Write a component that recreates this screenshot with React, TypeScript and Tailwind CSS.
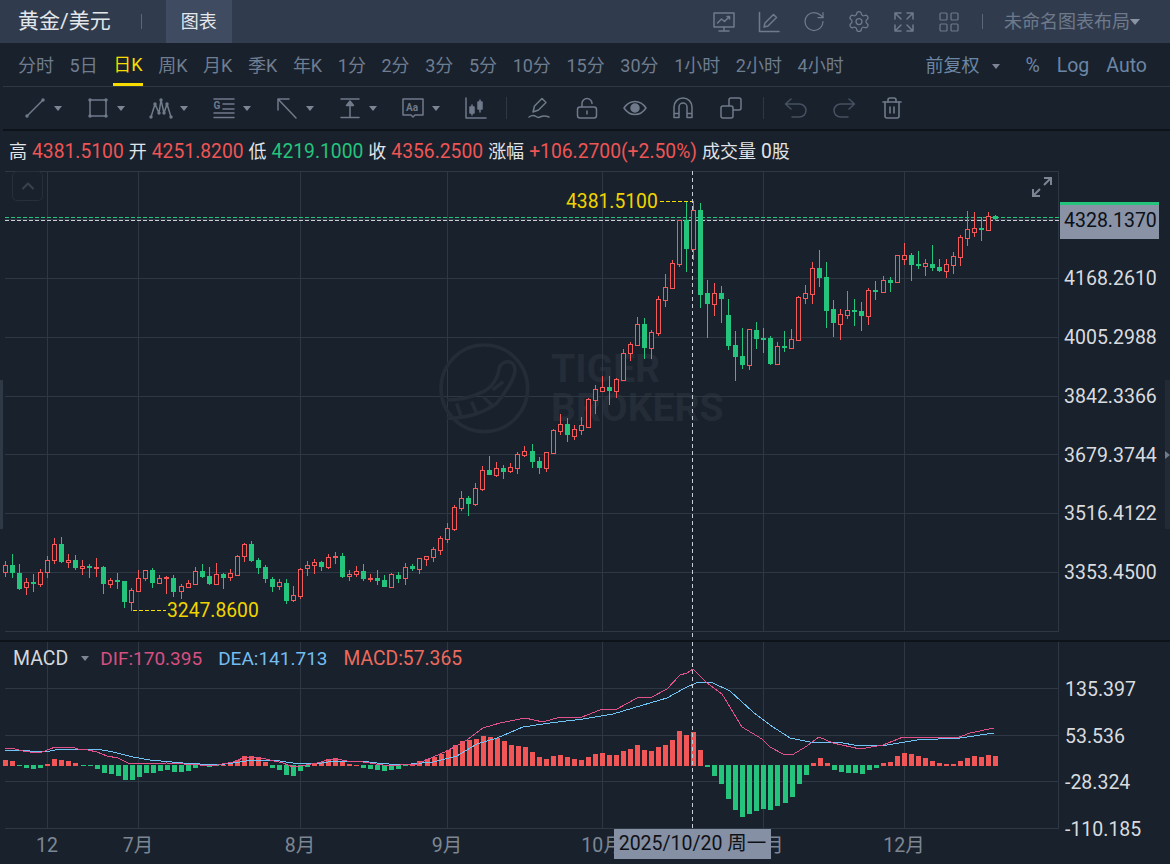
import { ChevronUp, LayoutGrid, RotateCw, Settings, Trash2 } from "lucide-react";
import { ReactNode } from "react";

const BG = "#19212c";
const UP = "#f55a5a";
const DOWN = "#25c47c";
const GRID = "#2e3844";

// x, body top, body bottom, high, low, green (page pixels)
const candles: number[][] = [
  [5, 565, 572, 561, 577, 0], [12, 565, 573, 554, 578, 1], [19, 573, 589, 564, 590, 1], [26, 582, 587, 578, 595, 0],
  [33, 582, 584, 574, 592, 1], [40, 572, 584, 569, 587, 0], [47, 560, 572, 556, 578, 0], [54, 544, 560, 538, 564, 0],
  [61, 544, 562, 537, 563, 1], [68, 560, 562, 554, 568, 0], [75, 560, 568, 555, 570, 1], [82, 566, 568, 560, 575, 0],
  [89, 566, 568, 564, 578, 1], [96, 567, 568, 558, 577, 0], [103, 567, 584, 566, 594, 1], [110, 580, 584, 578, 588, 0],
  [117, 580, 582, 573, 589, 1], [124, 581, 602, 581, 608, 1], [131, 590, 602, 588, 611, 0], [138, 578, 591, 570, 592, 0],
  [145, 570, 578, 570, 581, 0], [152, 570, 583, 568, 588, 1], [159, 578, 583, 575, 584, 0], [166, 577, 578, 576, 594, 0],
  [173, 578, 592, 575, 597, 1], [181, 586, 591, 584, 599, 0], [188, 583, 587, 580, 588, 0], [195, 571, 584, 567, 584, 0],
  [202, 571, 577, 564, 578, 1], [209, 576, 584, 567, 585, 1], [216, 574, 584, 563, 585, 0], [223, 574, 578, 573, 589, 1],
  [230, 573, 577, 569, 581, 0], [237, 556, 575, 555, 576, 0], [244, 544, 556, 543, 562, 0], [251, 544, 561, 541, 562, 1],
  [258, 560, 568, 558, 574, 1], [265, 567, 579, 565, 583, 1], [272, 579, 587, 577, 592, 1], [279, 582, 586, 579, 590, 0],
  [286, 583, 601, 579, 604, 1], [293, 595, 600, 586, 602, 0], [300, 569, 596, 568, 599, 0], [307, 565, 568, 561, 576, 0],
  [314, 562, 565, 559, 574, 0], [321, 562, 567, 561, 571, 1], [328, 557, 567, 554, 569, 0], [335, 556, 557, 552, 564, 0],
  [342, 556, 577, 553, 578, 1], [349, 574, 576, 570, 581, 0], [356, 571, 574, 566, 577, 0], [363, 571, 579, 564, 581, 1],
  [370, 578, 579, 574, 582, 0], [377, 578, 581, 570, 585, 1], [384, 580, 587, 575, 587, 1], [391, 574, 587, 573, 588, 0],
  [398, 575, 579, 572, 583, 1], [405, 567, 578, 563, 585, 0], [412, 566, 569, 564, 571, 1], [419, 558, 569, 558, 574, 0],
  [426, 556, 559, 556, 566, 0], [433, 549, 557, 547, 562, 0], [440, 538, 550, 536, 555, 0], [447, 528, 539, 523, 543, 0],
  [454, 507, 529, 505, 531, 0], [461, 498, 508, 491, 511, 0], [468, 498, 504, 496, 516, 1], [475, 488, 504, 483, 506, 0],
  [482, 470, 489, 466, 491, 0], [489, 470, 475, 456, 475, 1], [496, 468, 475, 462, 477, 0], [503, 468, 472, 465, 479, 1],
  [510, 467, 471, 463, 473, 0], [517, 454, 468, 452, 474, 0], [524, 451, 455, 446, 457, 0], [532, 451, 462, 444, 468, 1],
  [539, 461, 468, 457, 474, 1], [546, 452, 468, 452, 472, 0], [553, 430, 453, 429, 454, 0], [560, 424, 431, 414, 435, 0],
  [567, 424, 435, 418, 442, 1], [574, 429, 436, 425, 440, 0], [581, 425, 430, 417, 435, 0], [588, 399, 427, 398, 427, 0],
  [595, 389, 400, 385, 414, 0], [602, 387, 391, 376, 392, 0], [609, 387, 391, 376, 405, 1], [616, 379, 391, 378, 398, 0],
  [623, 353, 380, 349, 381, 0], [630, 344, 353, 342, 361, 0], [637, 324, 345, 317, 345, 0], [644, 324, 348, 318, 359, 1],
  [651, 332, 348, 330, 359, 0], [658, 299, 333, 296, 336, 0], [665, 287, 300, 274, 307, 0], [672, 263, 288, 260, 289, 0],
  [679, 220, 264, 220, 267, 0], [686, 220, 249, 201, 272, 1], [693, 210, 249, 201, 260, 0], [700, 210, 295, 203, 308, 1],
  [707, 293, 304, 280, 338, 1], [714, 293, 304, 283, 316, 0], [721, 293, 299, 286, 323, 1], [728, 315, 346, 299, 350, 1],
  [735, 345, 357, 331, 381, 1], [742, 356, 365, 328, 369, 1], [749, 329, 365, 329, 370, 0], [756, 330, 339, 322, 349, 1],
  [763, 338, 339, 328, 353, 1], [770, 338, 364, 336, 365, 1], [777, 346, 364, 342, 365, 0], [784, 346, 348, 331, 352, 1],
  [791, 339, 348, 329, 349, 0], [798, 297, 340, 296, 340, 0], [805, 293, 298, 285, 304, 0], [812, 268, 294, 262, 304, 0],
  [819, 268, 278, 250, 287, 1], [826, 277, 311, 262, 328, 1], [833, 309, 323, 300, 337, 1], [840, 314, 324, 309, 340, 0],
  [847, 310, 315, 291, 319, 0], [854, 310, 312, 299, 326, 1], [861, 311, 316, 302, 331, 1], [868, 290, 316, 288, 325, 0],
  [875, 290, 292, 281, 300, 1], [883, 280, 292, 276, 292, 0], [890, 280, 283, 277, 292, 1], [897, 255, 282, 255, 283, 0],
  [904, 255, 259, 243, 265, 0], [911, 255, 265, 253, 281, 1], [918, 264, 266, 251, 269, 1], [925, 263, 266, 259, 276, 0],
  [932, 264, 268, 245, 271, 1], [939, 267, 271, 259, 272, 1], [946, 264, 271, 259, 278, 0], [953, 256, 265, 252, 274, 0],
  [960, 237, 257, 235, 266, 0], [967, 229, 238, 211, 246, 0], [974, 228, 232, 212, 237, 0], [981, 228, 230, 217, 241, 1],
  [988, 216, 230, 212, 231, 0], [995, 216, 219, 215, 221, 1],
];

const histogram = [
  6, 5, -1, -3, -4, -3, 2, 7, 6, 5, 3, -1, -1, -4, -8, -9, -11, -15, -15, -12, -8, -8, -6, -5, -7, -7, -6, -3, -1, -2, -1,
  1, 2, 6, 10, 10, 9, 4, -3, -5, -10, -11, -6, -2, 3, 4, 7, 8, 4, 2, 1, -3, -4, -5, -6, -5, -4, -1, 1, 5, 7, 9, 12, 16, 21,
  25, 26, 27, 30, 29, 28, 25, 21, 20, 19, 14, 9, 7, 10, 11, 9, 7, 6, 9, 12, 13, 11, 11, 15, 17, 21, 16, 15, 19, 21, 26, 35,
  31, 34, 16, -2, -11, -19, -34, -45, -52, -49, -46, -44, -45, -41, -38, -32, -19, -10, 3, 8, 3, -5, -7, -8, -8, -9, -5,
  -3, 3, 4, 10, 13, 12, 10, 8, 5, 3, 2, 2, 5, 8, 10, 9, 11, 10,
];

const difLine =
  "5,749 15,750 23,752 30,753 42,753 50,750 55,748 72,748 78,750 88,751 97,753 107,757 118,759 128,764 133,765 167,764 200,766 217,766 233,763 243,759 257,758 270,761 283,764 293,768 300,767 317,764 328,761 337,760 347,762 363,763 383,766 400,766 417,765 433,758 447,752 467,741 483,729 500,724 510,722 525,719 543,723 560,718 582,718 600,711 617,710 637,699 652,698 667,690 680,676 687,674 693,670 707,684 722,695 742,728 762,740 770,748 783,755 792,756 807,747 819,738 833,744 860,750 883,746 903,738 930,738 957,739 970,734 994,729";
const deaLine =
  "5,751 30,752 50,752 60,750 97,750 113,753 133,758 150,761 183,764 217,766 233,764 253,761 273,761 293,764 317,765 333,762 360,762 377,764 400,766 433,763 457,757 477,745 497,739 523,728 550,724 583,720 613,715 633,709 667,699 683,690 698,683 713,684 730,692 753,713 770,726 790,739 810,743 837,743 860,747 887,746 917,741 960,739 994,734";

const priceLines = [219, 278, 337, 396, 454, 513, 572, 631];
const macdLines = [689, 736, 782, 829];
const monthLines = [47, 138, 300, 447, 602, 763, 904];
const timeframes = ["分时", "5日", "日K", "周K", "月K", "季K", "年K", "1分", "2分", "3分", "5分", "10分", "15分", "30分", "1小时", "2小时", "4小时"];

const Caret = () => <span className="block h-0 w-0 border-x-[4px] border-t-[5px] border-x-transparent border-t-[#7b8594]" />;

const Glyph = ({ children, size = 24, color = "#6f7a8a" }: { children: ReactNode; size?: number; color?: string }) => (
  <svg width={size} height={size} viewBox="0 0 24 24" fill="none" stroke={color} strokeWidth="1.5" strokeLinecap="round" strokeLinejoin="round">
    {children}
  </svg>
);

const Dot = ({ x, y }: { x: number; y: number }) => <circle cx={x} cy={y} r="1.7" fill="#6f7a8a" stroke="none" />;

const Tool = ({ children, caret }: { children: ReactNode; caret?: boolean }) => (
  <div className="flex h-6 w-[63px] items-center gap-[7px]">
    {children}
    {caret && <Caret />}
  </div>
);

const HeadIcon = ({ children }: { children: ReactNode }) => <div className="flex h-6 w-6 items-center justify-center">{children}</div>;

const Grid = ({ lines, top, bottom }: { lines: number[]; top: number; bottom: number }) => (
  <g shapeRendering="crispEdges" stroke={GRID}>
    {lines.map((y) => (
      <line key={y} x1="5" x2="1059" y1={y + 0.5} y2={y + 0.5} />
    ))}
    {monthLines.map((x) => (
      <line key={x} x1={x + 0.5} x2={x + 0.5} y1={top} y2={bottom} />
    ))}
    <line x1="1058.5" x2="1058.5" y1={top} y2={bottom} />
  </g>
);

const App = () => {
  return (
    <div className="relative flex h-[864px] w-[1170px] flex-col overflow-hidden bg-[#19212c] font-['Roboto','Noto_Sans_CJK_SC',sans-serif] text-[19.5px] leading-none">
      <header className="flex h-[43px] items-center justify-between bg-[#303c4e] pr-[30px] text-[#6e7a8b]">
        <div className="flex h-full items-center">
          <span className="ml-[18px] text-[21px] text-[#e4e7ea]">黄金/美元</span>
          <span className="ml-[30px] h-[15px] w-px bg-[#5b6676]" />
          <span className="ml-[24px] flex h-full w-[66px] items-center justify-center bg-[#3f4b60] text-[18px] text-[#e4e7ea]">图表</span>
        </div>
        <div className="flex items-center">
          <div className="flex items-center gap-[21px]">
            <HeadIcon>
              <Glyph>
                <rect x="2" y="3" width="20" height="14" />
                <path d="M5.500 13l4-4 3 2.500 5-5M15 6.500h2.500V9M12 17v4M7 21h10" />
              </Glyph>
            </HeadIcon>
            <HeadIcon>
              <Glyph>
                <path d="M2.500 2.500V21.500H22" />
                <path d="M7 17l1-4 8.500-8.500 3 3L11 16z" />
              </Glyph>
            </HeadIcon>
            <HeadIcon>
              <RotateCw size={27} strokeWidth={1.25} color="#6f7a8a" />
            </HeadIcon>
            <HeadIcon>
              <Settings size={27} strokeWidth={1.25} color="#6f7a8a" />
            </HeadIcon>
            <HeadIcon>
              <Glyph>
                <path d="M3 9V3h6M3 3l6 6M15 3h6v6M21 3l-6 6M3 15v6h6M3 21l6-6M21 15v6h-6M21 21l-6-6" />
              </Glyph>
            </HeadIcon>
            <HeadIcon>
              <LayoutGrid size={28} strokeWidth={1.2} color="#6f7a8a" />
            </HeadIcon>
          </div>
          <span className="ml-[21px] h-[15px] w-px bg-[#5b6676]" />
          <span className="ml-[21px] text-[18px]">未命名图表布局</span>
          <span className="h-0 w-0 border-x-[5px] border-t-[6px] border-x-transparent border-t-[#8994a4]" />
        </div>
      </header>

      <nav className="ml-[3px] flex h-[44px] items-center justify-between border-b border-[#2e3844] pl-[15px] pr-[23px] text-[18px] text-[#6f7d90]">
        <div className="flex h-full items-center gap-[15.600px] pt-[2px]">
          {timeframes.map((item) =>
            item === "日K" ? (
              <span key={item} className="flex h-full items-center border-b-[3px] border-[#f7dc00] pt-[1px] text-[#f7dc00]">
                {item}
              </span>
            ) : (
              <span key={item} className="pt-[1px]">
                {item}
              </span>
            )
          )}
        </div>
        <div className="flex items-center pt-[3px] text-[#6c86a5]">
          <span>前复权</span>
          <span className="ml-[13px]">
            <Caret />
          </span>
          <span className="ml-[25px] text-[19.500px]">%</span>
          <span className="ml-[17px] text-[19.500px]">Log</span>
          <span className="ml-[17px] text-[19.500px]">Auto</span>
        </div>
      </nav>

      <div className="ml-[3px] flex h-[44px] items-center border-b-2 border-[#0e131a] pl-[20px]">
        <Tool caret>
          <Glyph>
            <path d="M4 20L20 4" />
            <Dot x={4} y={20} />
            <Dot x={20} y={4} />
          </Glyph>
        </Tool>
        <Tool caret>
          <Glyph>
            <rect x="4" y="4" width="16" height="16" />
            <Dot x={4} y={4} />
            <Dot x={20} y={4} />
            <Dot x={4} y={20} />
            <Dot x={20} y={20} />
          </Glyph>
        </Tool>
        <Tool caret>
          <Glyph>
            <path d="M2 21L6 8l4 9 2-13 3 13 3-9 4 13" />
            <Dot x={2} y={21} />
            <Dot x={6} y={8} />
            <Dot x={10} y={17} />
            <Dot x={12} y={4} />
            <Dot x={15} y={17} />
            <Dot x={18} y={8} />
            <Dot x={22} y={21} />
          </Glyph>
        </Tool>
        <Tool caret>
          <Glyph>
            <path d="M2 3h20M11 8h11M11 13h11M2 17h20M2 21.500h20" />
            <text x="1.500" y="13" fontSize="10" fontWeight="700" fill="#6f7a8a" stroke="none">
              G
            </text>
          </Glyph>
        </Tool>
        <Tool caret>
          <Glyph>
            <path d="M3 14V3h11M3 3l18 19" />
          </Glyph>
        </Tool>
        <Tool caret>
          <Glyph>
            <path d="M3 3h18M3 21.500h18M12 21V7" />
            <path d="M8.500 9.500L12 5l3.500 4.500z" fill="#6f7a8a" />
          </Glyph>
        </Tool>
        <Tool caret>
          <Glyph>
            <path d="M2 3h20v16h-8l-2 2-2-2H2z" />
            <text x="5" y="15" fontSize="10" fontWeight="700" fill="#6f7a8a" stroke="none">
              Aa
            </text>
          </Glyph>
        </Tool>
        <div className="flex h-6 w-[42px] items-center">
          <Glyph>
            <path d="M2 2v20h20" />
            <path d="M8 9v10M16 4v12" />
            <rect x="6" y="11" width="4" height="6" fill="#6f7a8a" />
            <rect x="14" y="6" width="4" height="7" fill="#6f7a8a" />
          </Glyph>
        </div>
        <span className="h-[22px] w-px bg-[#2e3844]" />
        <div className="ml-[20px] flex items-center gap-[24px]">
          <Glyph>
            <path d="M6 16l1.500-6L15 2.500l4 4L11.500 14z" />
            <path d="M2 21c3-2 5-2 7-.5s3 1 4 .5 4-2 9 0" />
          </Glyph>
          <Glyph>
            <rect x="2.500" y="11" width="19" height="11" rx="2.500" />
            <path d="M7 11V7.500a5 5 0 0 1 10 0M12 15v3" />
          </Glyph>
          <Glyph>
            <path d="M1 12c3-4.500 7-6.500 11-6.500s8 2 11 6.500c-3 4.500-7 6.500-11 6.500S4 16.500 1 12z" />
            <circle cx="12" cy="12" r="4" fill="#6f7a8a" />
          </Glyph>
          <Glyph>
            <path d="M3 21.500V11a9 9 0 0 1 18 0v10.500h-5V11a4 4 0 0 0-8 0v10.500zM3 17.500h5M16 17.500h5" />
          </Glyph>
          <Glyph>
            <rect x="10" y="2" width="12" height="12" rx="2" />
            <rect x="2" y="10" width="12" height="12" rx="2" fill={BG} />
          </Glyph>
        </div>
        <span className="ml-[20px] h-[22px] w-px bg-[#2e3844]" />
        <div className="ml-[20px] flex items-center gap-[24px]">
          <Glyph color="#465161">
            <path d="M7 3L1.500 8 7 13M2 8h13.500a6.500 6.500 0 0 1 0 13H8" />
          </Glyph>
          <Glyph color="#465161">
            <path d="M17 3l5.500 5L17 13M22 8H8.500a6.500 6.500 0 0 0 0 13H16" />
          </Glyph>
          <Trash2 size={24} strokeWidth={1.6} color="#6f7a8a" />
        </div>
      </div>

      <div className="flex h-[39px] items-center gap-[5px] pl-[9px] pt-[2px] text-[19.300px] text-[#e1e4e8]">
        <span className="text-[18px]">高</span>
        <span className="text-[#ee5555]">4381.5100</span>
        <span className="text-[18px]">开</span>
        <span className="text-[#ee5555]">4251.8200</span>
        <span className="text-[18px]">低</span>
        <span className="text-[#25c47c]">4219.1000</span>
        <span className="text-[18px]">收</span>
        <span className="text-[#ee5555]">4356.2500</span>
        <span className="text-[18px]">涨幅</span>
        <span className="text-[#ee5555]">+106.2700(+2.50%)</span>
        <span className="text-[18px]">成交量</span>
        <span>
          0<span className="text-[18px]">股</span>
        </span>
      </div>

      <section className="relative flex h-[472px] border-b-2 border-[#0e131a]">
        <div className="absolute left-[551px] top-[180px] text-[39px] font-bold leading-[39px] text-[#242c37]">
          TIGER
          <br />
          BROKERS
        </div>
        <svg className="relative" width="1060" height="470" viewBox="0 170 1060 470">
          <Grid lines={[171, ...priceLines]} top={171} bottom={632} />
          <g fill="none" stroke="#242c37" strokeWidth="11" transform="translate(400 340) scale(.3333)">
            <circle cx="253" cy="145" r="130" />
            <path d="M297 85c8-25 48-30 48 5 0 25-30 70-55 100-40 30-90 45-150 45M297 85c-2 30-25 60-47 70-30 15-70 25-110 25M278 150l32-25M250 170l25 25M215 185l17 40M170 190l15 45" />
          </g>
          <g shapeRendering="crispEdges">
            <line x1="692.500" x2="692.500" y1="171" y2="640" stroke="#c9ced6" strokeDasharray="4 3" />
            <line x1="5" x2="1059" y1="217.500" y2="217.500" stroke={DOWN} strokeDasharray="4 2" />
            <line x1="5" x2="1059" y1="220.500" y2="220.500" stroke="#c9ced6" strokeDasharray="4 2" />
            {candles.map(([x, top, bottom, high, low, green]) => {
              const color = green ? DOWN : UP;
              return (
                <g key={x}>
                  <line x1={x + 0.5} x2={x + 0.5} y1={high} y2={low} stroke={color} />
                  {green ? (
                    <rect x={x - 2} y={top} width="5" height={Math.max(bottom - top, 2)} fill={color} />
                  ) : (
                    <rect x={x - 1.5} y={top + 0.5} width="4" height={bottom - top} fill={BG} stroke={color} />
                  )}
                </g>
              );
            })}
            <line x1="660" x2="692" y1="201.500" y2="201.500" stroke="#f7dc00" strokeDasharray="4 2" />
            <line x1="133" x2="166" y1="610.500" y2="610.500" stroke="#f7dc00" strokeDasharray="4 2" />
          </g>
        </svg>
        <div className="pl-[4px] pt-[79.500px] text-[#d8dbdf]">
          {["4168.2610", "4005.2988", "3842.3366", "3679.3744", "3516.4122", "3353.4500"].map((price) => (
            <div key={price} className="flex h-[58.800px] items-center">
              {price}
            </div>
          ))}
        </div>

        <span className="absolute left-[566px] top-[22px] text-[19.300px] text-[#f0d400]">4381.5100</span>
        <span className="absolute left-[167px] top-[431px] text-[19.300px] text-[#f0d400]">3247.8600</span>
        <div className="absolute left-[12px] top-[1px] flex h-[30px] w-[31px] items-center justify-center rounded-[5px] border border-[#272f3b]">
          <ChevronUp size={20} strokeWidth={2.5} color="#38424f" />
        </div>
        <svg className="absolute left-[1031px] top-[6px]" width="22" height="22" viewBox="0 0 22 22" fill="none" stroke="#7b8594" strokeWidth="2">
          <path d="M13 2h7v7M20 2l-7 7M2 13v7h7M2 20l7-7" />
        </svg>
        <div className="absolute left-[1060px] top-[32px] w-[99px] border-t-[3px] border-[#25c47c] bg-[#8a92a6] py-[6px] pb-[8px] pl-[4px] text-[#0b1017]">
          4328.1370
        </div>
      </section>

      <section className="relative flex h-[187px]">
        <svg width="1060" height="187" viewBox="0 643 1060 187">
          <Grid lines={macdLines} top={643} bottom={830} />
          <g shapeRendering="crispEdges">
            {histogram.map((value, i) => {
              const x = Math.round(5.3 + 7.02 * i) - 2;
              return value > 0 ? (
                <rect key={i} x={x} y={767 - value} width="5" height={value} fill="#f25656" />
              ) : (
                <rect key={i} x={x} y="766" width="5" height={-value} fill={DOWN} />
              );
            })}
            <polyline points={deaLine} fill="none" stroke="#6fc3f5" />
            <polyline points={difLine} fill="none" stroke="#e2528a" />
            <line x1="692.500" x2="692.500" y1="643" y2="830" stroke="#c9ced6" strokeDasharray="4 3" />
          </g>
        </svg>
        <div className="pl-[5px] pt-[24.500px] text-[#d8dbdf]">
          {["135.397", "53.536", "-28.324", "-110.185"].map((value) => (
            <div key={value} className="flex h-[46.700px] items-center">
              {value}
            </div>
          ))}
        </div>
        <div className="absolute left-[13px] top-[7px] flex items-center">
          <span className="text-[#d5d8dc]">MACD</span>
          <span className="ml-[13px]">
            <Caret />
          </span>
          <span className="ml-[11px] text-[19px] text-[#d64f80]">DIF:170.395</span>
          <span className="ml-[16px] text-[19px] text-[#73bdf0]">DEA:141.713</span>
          <span className="ml-[16px] text-[19.300px] text-[#ec6a5e]">MACD:57.365</span>
        </div>
      </section>

      <div className="relative flex h-[34px] items-center text-center text-[#7d8794]">
        <span className="w-[94px]">12</span>
        <span className="w-[88px]">7月</span>
        <span className="w-[236px]">8月</span>
        <span className="w-[58px]">9月</span>
        <span className="w-[252px]">10月</span>
        <span className="w-[70px]">11月</span>
        <span className="w-[212px]">12月</span>
        <div className="absolute left-[614px] top-0 flex h-[30px] w-[157px] items-center justify-center bg-[#8590a5] text-[#0e1116]">2025/10/20 周一</div>
      </div>

      <span className="absolute left-0 top-[380px] h-[149px] w-[3px] bg-[#2f3946]" />
      <div className="absolute right-0 top-[380px] flex h-[149px] w-[5px] items-center bg-[#222a36]">
        <span className="h-0 w-0 border-y-[4px] border-l-[5px] border-y-transparent border-l-[#6f7a8a]" />
      </div>
    </div>
  );
};

export default App;
